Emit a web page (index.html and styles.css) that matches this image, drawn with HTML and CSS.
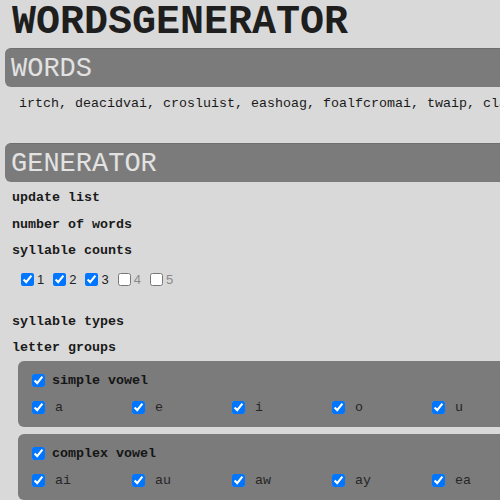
FILE: index.html
```html
<!DOCTYPE html>
<html>
<head>
<meta charset="utf-8">
<link rel="stylesheet" href="styles.css">
</head>
<body>
<h1 class="title">WORDSGENERATOR</h1>
<section class="panel">
  <h2 class="bar">WORDS</h2>
  <p class="words">irtch, deacidvai, crosluist, eashoag, foalfcromai, twaip, claiphoun, streasp</p>
</section>
<section class="panel">
  <h2 class="bar">GENERATOR</h2>
  <div class="fields">
    <div class="label">update list</div>
    <div class="label">number of words</div>
    <div class="label">syllable counts</div>
    <div class="counts">
      <label class="count"><input type="checkbox" checked>1</label>
      <label class="count"><input type="checkbox" checked>2</label>
      <label class="count"><input type="checkbox" checked>3</label>
      <label class="count off"><input type="checkbox">4</label>
      <label class="count off"><input type="checkbox">5</label>
    </div>
    <div class="label">syllable types</div>
    <div class="label">letter groups</div>
  </div>
  <div class="group">
    <label class="group-head"><input type="checkbox" checked>simple vowel</label>
    <div class="letters">
      <label class="letter"><input type="checkbox" checked>a</label>
      <label class="letter"><input type="checkbox" checked>e</label>
      <label class="letter"><input type="checkbox" checked>i</label>
      <label class="letter"><input type="checkbox" checked>o</label>
      <label class="letter"><input type="checkbox" checked>u</label>
    </div>
  </div>
  <div class="group">
    <label class="group-head"><input type="checkbox" checked>complex vowel</label>
    <div class="letters">
      <label class="letter"><input type="checkbox" checked>ai</label>
      <label class="letter"><input type="checkbox" checked>au</label>
      <label class="letter"><input type="checkbox" checked>aw</label>
      <label class="letter"><input type="checkbox" checked>ay</label>
      <label class="letter"><input type="checkbox" checked>ea</label>
    </div>
  </div>
</section>
</body>
</html>
```
FILE: styles.css
```css
html, body {
  margin: 0;
  background: #d9d9d9;
  overflow: hidden;
}
body {
  padding: 0 0 0 5px;
  width: 700px;
  font-family: "Liberation Mono", "Courier New", monospace;
  color: #1a1a1a;
}
.title {
  margin: 0;
  padding: 3px 0 0 7px;
  height: 45px;
  font-size: 40px;
  line-height: 40px;
  font-weight: bold;
  color: #1e1e1e;
}
.panel {
  margin: 0;
}
.bar {
  margin: 0;
  height: 38px;
  background: #7b7b7b;
  border-top: 1px solid #6e6e6e;
  border-radius: 6px;
  padding-left: 6px;
  font-size: 27px;
  line-height: 40px;
  font-weight: normal;
  color: #e2e2e2;
}
.words {
  margin: 0;
  padding: 9px 0 0 14px;
  height: 47px;
  font-size: 13.333px;
  line-height: 16px;
  color: #1a1a1a;
  white-space: nowrap;
}
.fields {
  padding-top: 3px;
}
.label {
  padding-left: 7px;
  height: 26.5px;
  line-height: 26px;
  font-size: 13.333px;
  font-weight: bold;
}
.counts {
  display: flex;
  padding: 5px 0 0 12px;
  height: 39px;
  gap: 5px;
}
.count {
  display: flex;
  align-items: center;
  height: 19px;
  font-family: "Liberation Sans", Arial, sans-serif;
  font-size: 13px;
  color: #222;
}
.count input {
  margin: 0 3px 0 4px;
  width: 13px;
  height: 13px;
}
.count.off {
  color: #8a8a8a;
}
.group {
  margin: -1px 0 8px 13px;
  background: #7b7b7b;
  border-radius: 6px;
  padding: 10px 0 10px 10px;
  height: 46px;
}
.group-head {
  display: flex;
  align-items: center;
  height: 20px;
  font-size: 13.333px;
  font-weight: bold;
  color: #151515;
}
.group-head input, .letter input {
  margin: 0 7px 0 4px;
  width: 13px;
  height: 13px;
}
.letters {
  display: flex;
  margin-top: 7px;
}
.letter {
  display: flex;
  align-items: center;
  width: 100px;
  height: 20px;
  font-size: 13.333px;
  color: #262626;
}
.letter input {
  margin-right: 10px;
}
```
